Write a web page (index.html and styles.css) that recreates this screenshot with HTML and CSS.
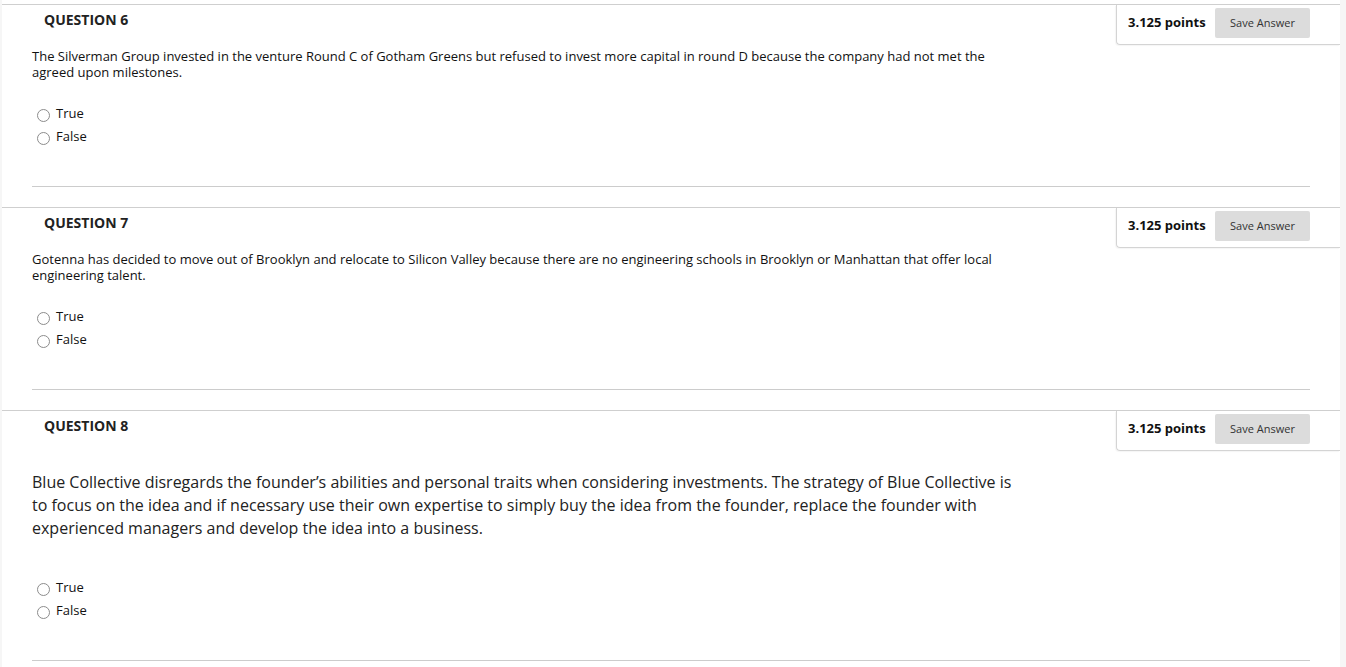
FILE: index.html
```html
<!DOCTYPE html>
<html lang="en">
<head>
<meta charset="utf-8">
<title>Test</title>
<link rel="stylesheet" href="styles.css">
</head>
<body>
<div class="page">
  <section class="question">
    <div class="q-head">
      <h3 class="q-title">QUESTION 6</h3>
      <div class="points-box"><span class="points">3.125 points</span><button class="save-btn">Save Answer</button></div>
    </div>
    <div class="q-body">
      <p class="q-text">The Silverman Group invested in the venture Round C of Gotham Greens but refused to invest more capital in round D because the company had not met the agreed upon milestones.</p>
      <ul class="choices">
        <li class="choice"><span class="radio"></span><span>True</span></li>
        <li class="choice"><span class="radio"></span><span>False</span></li>
      </ul>
    </div>
    <hr class="q-sep">
  </section>
  <section class="question">
    <div class="q-head">
      <h3 class="q-title">QUESTION 7</h3>
      <div class="points-box"><span class="points">3.125 points</span><button class="save-btn">Save Answer</button></div>
    </div>
    <div class="q-body">
      <p class="q-text">Gotenna has decided to move out of Brooklyn and relocate to Silicon Valley because there are no engineering schools in Brooklyn or Manhattan that offer local engineering talent.</p>
      <ul class="choices">
        <li class="choice"><span class="radio"></span><span>True</span></li>
        <li class="choice"><span class="radio"></span><span>False</span></li>
      </ul>
    </div>
    <hr class="q-sep">
  </section>
  <section class="question">
    <div class="q-head">
      <h3 class="q-title">QUESTION 8</h3>
      <div class="points-box"><span class="points">3.125 points</span><button class="save-btn">Save Answer</button></div>
    </div>
    <div class="q-body">
      <p class="q-text q-text-large">Blue Collective disregards the founder’s abilities and personal traits when considering investments. The strategy of Blue Collective is to focus on the idea and if necessary use their own expertise to simply buy the idea from the founder, replace the founder with experienced managers and develop the idea into a business.</p>
      <ul class="choices choices-large">
        <li class="choice"><span class="radio"></span><span>True</span></li>
        <li class="choice"><span class="radio"></span><span>False</span></li>
      </ul>
    </div>
    <hr class="q-sep">
  </section>
</div>
</body>
</html>
```
FILE: styles.css
```css
html, body {
  margin: 0;
  padding: 0;
  overflow: hidden;
}
body {
  background: #f6f6f6;
  font-family: "Open Sans", "Noto Sans", sans-serif;
  color: #111;
}
.page {
  margin-left: 2px;
  width: 1338px;
  min-height: 667px;
  background: #fff;
  padding-top: 4px;
  box-sizing: border-box;
}
.question {
  border-top: 1px solid #cfcfcf;
  padding-bottom: 20px;
}
.q-head {
  display: flex;
  justify-content: space-between;
  align-items: flex-start;
}
.q-title {
  margin: 0;
  padding: 6px 0 0 42px;
  font-size: 14px;
  line-height: 18px;
  font-weight: 700;
  color: #222;
}
.points-box {
  box-sizing: border-box;
  width: 224px;
  height: 40px;
  border-left: 1px solid #d4d4d4;
  border-bottom: 1px solid #d4d4d4;
  border-bottom-left-radius: 4px;
  box-shadow: -1px 1px 1px rgba(0,0,0,0.04);
  display: flex;
  align-items: center;
  justify-content: space-between;
  padding: 0 30px 5px 11px;
}
.points {
  font-size: 13px;
  font-weight: 700;
  color: #111;
}
.save-btn {
  width: 95px;
  height: 30px;
  border: 0;
  border-radius: 2px;
  background: #dcdcdc;
  color: #333;
  font-family: "Open Sans", "Noto Sans", sans-serif;
  font-size: 11px;
  padding: 0;
  margin-top: 1px;
}
.q-body {
  padding: 0 30px;
}
.q-text {
  margin: 3px 0 0;
  max-width: 990px;
  font-size: 13px;
  line-height: 16px;
  color: #111;
}
.q-text-large {
  margin-top: 20px;
  font-size: 16px;
  line-height: 23px;
  color: #222;
}
.choices {
  list-style: none;
  margin: 21px 0 0;
  padding: 0;
}
.choices-large {
  margin-top: 35px;
}
.choice {
  display: flex;
  align-items: center;
  height: 23px;
  font-size: 13px;
  color: #111;
}
.radio {
  box-sizing: border-box;
  width: 13px;
  height: 13px;
  border: 1px solid #8c8c8c;
  border-radius: 50%;
  background: #fff;
  margin: 6px 6px 0 5px;
}
.q-sep {
  margin: 39px 30px 0;
  border: 0;
  border-top: 1px solid #cccccc;
  height: 0;
}
```
